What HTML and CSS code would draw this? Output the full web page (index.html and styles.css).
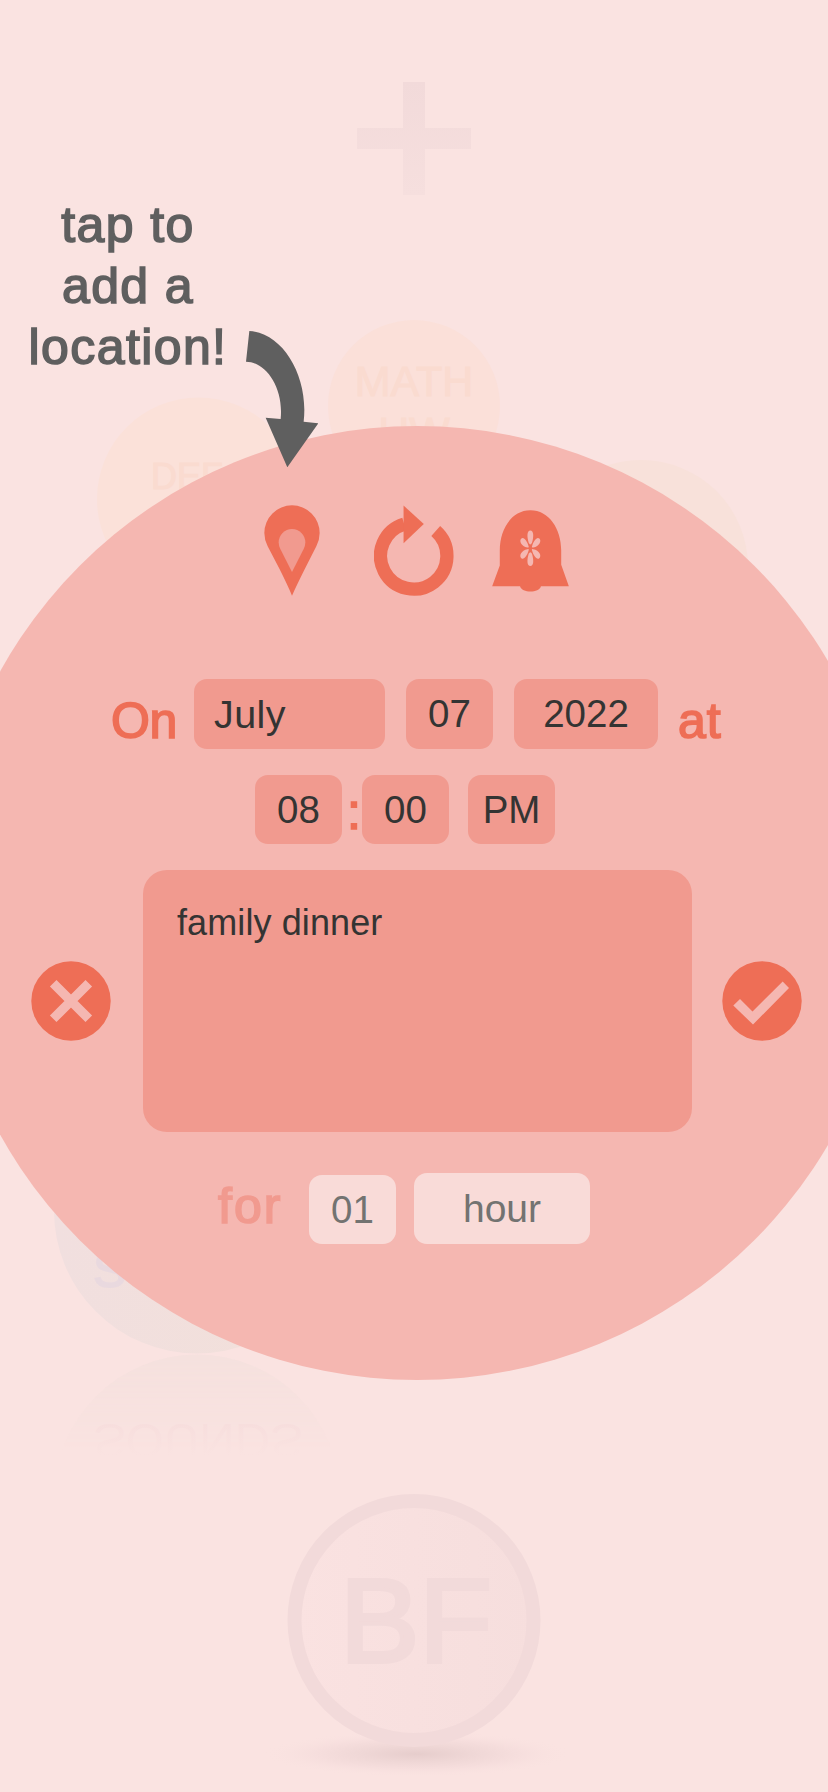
FILE: index.html
```html
<!DOCTYPE html>
<html lang="en">
<head>
<meta charset="utf-8">
<title>Add event</title>
<link rel="stylesheet" href="styles.css">
</head>
<body>
<main class="screen">
  <svg class="backdrop" viewBox="0 0 828 1792" aria-hidden="true">
    <defs>
      <linearGradient id="plusFade" x1="0" y1="0" x2="0" y2="1"><stop offset="0" stop-color="#f2dada"/><stop offset="1" stop-color="#f6dfde"/></linearGradient>
      <linearGradient id="badgeFill"><stop offset="0" stop-color="#fae2e1"/><stop offset="1" stop-color="#f6dedd"/></linearGradient>
      <linearGradient id="soundFill"><stop offset="0" stop-color="#f1dfdf"/><stop offset="1" stop-color="#f2e0d9"/></linearGradient>
      <linearGradient id="mirrorFade" gradientUnits="userSpaceOnUse" x1="0" y1="1354" x2="0" y2="1450"><stop offset="0" stop-color="#fff" stop-opacity=".5"/><stop offset=".45" stop-color="#fff" stop-opacity=".24"/><stop offset=".8" stop-color="#fff" stop-opacity=".08"/><stop offset="1" stop-color="#fff" stop-opacity="0"/></linearGradient>
      <mask id="mirrorMask" maskUnits="userSpaceOnUse" x="0" y="1354" width="400" height="110"><rect x="0" y="1354" width="400" height="110" fill="url(#mirrorFade)"/></mask>
      <linearGradient id="mirrorInk" gradientUnits="userSpaceOnUse" x1="0" y1="1284" x2="0" y2="1252"><stop offset="0" stop-color="#f7dedd"/><stop offset="1" stop-color="#fae3e1"/></linearGradient>
      <radialGradient id="shadow"><stop offset="0" stop-color="#e6cdcc"/><stop offset=".35" stop-color="#efd7d6"/><stop offset=".65" stop-color="#f6dedd"/><stop offset="1" stop-color="#fae3e1" stop-opacity="0"/></radialGradient>
    </defs>
    <path d="M403 82h22v46h46v21h-46v46h-22v-46h-46v-21h46z" fill="url(#plusFade)"/>
    <circle cx="198.500" cy="499" r="101.500" fill="#fbe1d9"/>
    <text class="bubble-text" x="151" y="489" font-size="36">DEF</text>
    <circle cx="414" cy="406" r="86" fill="#fbe0d9"/>
    <text class="bubble-text" x="414" y="396" font-size="43" text-anchor="middle">MATH</text>
    <text class="bubble-text" x="414" y="447" font-size="43" text-anchor="middle">HW</text>
    <circle cx="641" cy="567" r="107" fill="#f8e1da"/>
    <circle cx="197" cy="1210.500" r="143" fill="url(#soundFill)"/>
    <text class="sound-text" x="198" y="1287" text-anchor="middle">SOUNDS</text>
    <g mask="url(#mirrorMask)">
      <circle cx="197" cy="1497.500" r="143" fill="#f0dfdb"/>
    </g>
    <g transform="matrix(1 0 0 -1 0 2708)">
      <text class="mirror-text" x="198" y="1284" text-anchor="middle">SOUNDS</text>
    </g>
    <ellipse cx="417" cy="1754" rx="155" ry="23" fill="url(#shadow)"/>
    <circle cx="414" cy="1620.500" r="119.500" fill="url(#badgeFill)" stroke="#f2dada" stroke-width="14"/>
    <text class="badge-text" x="416" y="1662" text-anchor="middle">BF</text>
  </svg>

  <section class="dialog">
    <div class="content">
      <div class="actions">
        <svg class="pin" viewBox="71 74 168 273"><path fill="#ee6e56" d="M72 158A83 83 0 0 1 238 158Q238 178 228 198L193 267Q170 313 155 346Q142 315 118 267L82 198Q72 178 72 158Z"/><path fill="#f19a8f" d="M115 186A40 40 0 0 1 195 186Q195 196 190 206L155 275L120 206Q115 196 115 186Z"/></svg>
        <svg class="repeat" viewBox="401 75 241 273"><path d="M492 132A100 100 0 1 0 587 153" fill="none" stroke="#ee6e56" stroke-width="40"/><path d="M490 76L551 132L490 190Z" fill="#ee6e56"/></svg>
        <svg class="bell" viewBox="756 88 231 247"><path fill="#ee6e56" d="M779 255V210C779 145 815 89 871 89S964 145 964 210V253L987 318H903C898 339 845 339 840 318H756Z"/><g fill="#f5b7b1"><path d="M871 150C881 150 882 167 876 187Q871 197 866 187C860 167 861 150 871 150Z"/><path d="M871 257C881 257 882 240 876 220Q871 210 866 220C860 240 861 257 871 257Z"/><path id="side" d="M844 174C851 168 861 180 866 198Q868 202 862 201C844 198 836 181 844 174Z"/><use href="#side" transform="matrix(-1 0 0 1 1742 0)"/><use href="#side" transform="matrix(1 0 0 -1 0 407)"/><use href="#side" transform="matrix(-1 0 0 -1 1742 407)"/></g></svg>
      </div>

      <div class="row date">
        <span class="label on">On</span>
        <span class="field month">July</span>
        <span class="field day">07</span>
        <span class="field year">2022</span>
        <span class="label at">at</span>
      </div>

      <div class="row time">
        <span class="field short">08</span>
        <span class="label colon">:</span>
        <span class="field short">00</span>
        <span class="field short meridiem">PM</span>
      </div>

      <div class="note-row">
        <svg class="round" viewBox="0 0 80 80"><circle cx="40" cy="40" r="39.700" fill="#ee6e56"/><path d="M22.200 22.200L57.800 57.800M57.800 22.200L22.200 57.800" stroke="#f5b7b1" stroke-width="9.300"/></svg>
        <div class="note">family dinner</div>
        <svg class="round" viewBox="0 0 80 80"><circle cx="40" cy="40" r="39.700" fill="#ee6e56"/><path d="M11.300 44.500L18 38L30.500 50.500L60.700 20.500L67 27L31 63.500Z" fill="#f5b7b1"/></svg>
      </div>

      <div class="row duration">
        <span class="label for">for</span>
        <span class="field pale amount">01</span>
        <span class="field pale unit">hour</span>
      </div>
    </div>
  </section>

  <aside class="hint">
    <p class="hint-text">tap to<br>add a<br>location!</p>
    <svg class="arrow" viewBox="738 453 217 409"><path fill="#5f5f5f" d="M748 453C850 458 927 592 911 725L955 730L862 862L797 713L842 717C852 622 796 545 738 545Z"/></svg>
  </aside>
</main>
</body>
</html>
```

FILE: styles.css
```css
* { box-sizing: border-box; }

body {
  margin: 0;
  background: #fae3e1;
  font-family: "Liberation Sans", Arial, sans-serif;
}

.screen {
  position: relative;
  width: 828px;
  height: 1792px;
  overflow: hidden;
}

.backdrop { display: block; width: 828px; height: 1792px; }
.bubble-text { fill: #fadbd0; stroke: #fadbd0; stroke-width: 1px; }
.sound-text { fill: #e9d9df; stroke: #e9d9df; stroke-width: 1.8px; font-size: 49px; }
.mirror-text { fill: url(#mirrorInk); font-size: 49px; }
.badge-text { fill: #f2dada; stroke: #f2dada; stroke-width: 4px; font-size: 119px; }

/* Round dialog, wider than the screen */
.dialog {
  position: absolute;
  left: -60px;
  top: 426px;
  width: 954px;
  height: 954px;
  border-radius: 50%;
  background: #f5b7b1;
}

.content {
  width: 828px;
  margin-left: 60px;
  padding-top: 79px;
}

.actions {
  display: flex;
  height: 91px;
  padding-left: 264px;
}
.pin { width: 56px; height: 91px; }
.repeat { width: 80px; height: 91px; margin-left: 54px; }
.bell { width: 77px; height: 82px; margin: 4.500px 0 0 38px; }

.row { display: flex; align-items: flex-start; }

.field {
  height: 70px;
  border-radius: 13px;
  background: #f19a8f;
  color: #343433;
  font-size: 38.5px;
  line-height: 70px;
  text-align: center;
}

.label {
  color: #ee6e56;
  -webkit-text-stroke: 1.7px currentColor;
  font-size: 50px;
  line-height: 70px;
}

.date { height: 70px; margin-top: 83px; padding-left: 111px; }
.on { width: 83px; margin-top: 7px; letter-spacing: -.5px; }
.month { width: 191px; padding-left: 20px; text-align: left; font-size: 39.5px; letter-spacing: .4px; }
.day { width: 87px; margin-left: 21px; }
.year { width: 144px; margin-left: 21px; }
.at { margin: 7px 0 0 20px; letter-spacing: 1px; }

.time { height: 69px; margin-top: 26px; padding-left: 255px; }
.short { width: 87px; height: 69px; line-height: 69px; }
.colon { width: 20px; margin-top: 2px; padding-left: 5px; }
.meridiem { margin-left: 19px; }

.note-row {
  display: flex;
  align-items: center;
  height: 262px;
  margin-top: 26px;
  padding-left: 31px;
}
.round { width: 80px; height: 80px; }
.note {
  width: 549px;
  height: 262px;
  margin: 0 30px 0 32px;
  padding: 32px 34px;
  border-radius: 24px;
  background: #f19a8f;
  color: #343433;
  font-size: 36px;
  letter-spacing: .1px;
  line-height: 42px;
}

.duration { margin-top: 41px; padding-left: 218px; }
.for { width: 91px; margin-top: -2px; color: #f19a8f; letter-spacing: 2px; }
.pale { background: #f9dbd8; color: #737371; }
.amount { width: 87px; height: 69px; margin-top: 2px; line-height: 69px; }
.unit { width: 176px; height: 71px; margin-left: 18px; line-height: 71px; font-size: 39px; }

/* Coach mark over the dialog */
.hint {
  position: absolute;
  left: 0;
  top: 195px;
  display: flex;
  color: #5f5f5f;
}
.hint-text {
  width: 246px;
  margin: 0;
  padding-left: 10px;
  -webkit-text-stroke: 1.6px currentColor;
  font-size: 50px;
  letter-spacing: 1.4px;
  line-height: 61px;
  text-align: center;
}
.arrow { width: 72.300px; height: 136.300px; margin-top: 136px; }
```
